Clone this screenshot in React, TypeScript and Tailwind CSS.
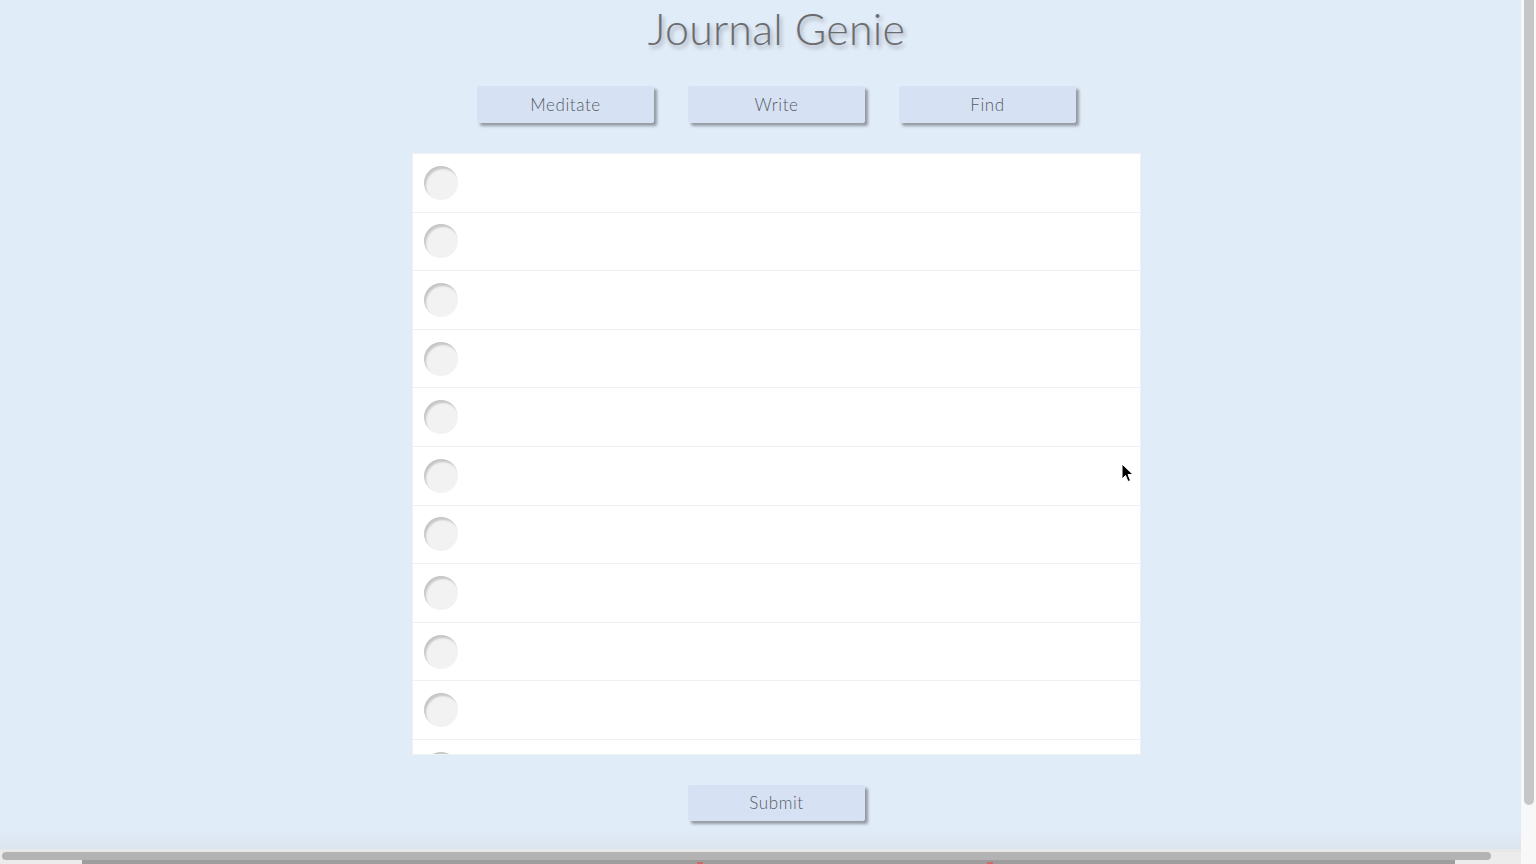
import React from "react";

const font = { fontFamily: "Lato, 'Noto Sans', sans-serif" };

function Btn({ label, h = "h-[37px]" }: { label: string; h?: string }) {
  return (
    <button
      className={`w-[177px] ${h} bg-[#d6e2f3] text-[#575b63] text-[17px] font-light tracking-[0.6px] shadow-[3px_3px_3px_rgba(0,0,0,0.35)] rounded-[2px]`}
      style={font}
    >
      {label}
    </button>
  );
}

export default function App() {
  const rows = Array.from({ length: 11 });
  return (
    <div className="relative w-[1553px] h-[897px] bg-[#e1ecf9] flex flex-col items-center" style={font}>
      <h1
        className="h-[50px] pt-[7px] text-[43px] leading-none font-light text-[#6c6c6e] tracking-[0.2px] [text-shadow:2px_3px_4px_rgba(0,0,0,0.3)]"
        style={font}
      >
        Journal Genie
      </h1>
      <div className="mt-[36px] flex gap-[34px]">
        <Btn label="Meditate" />
        <Btn label="Write" />
        <Btn label="Find" />
      </div>
      <div className="mt-[30px] w-[729px] h-[602px] bg-white overflow-hidden border border-[#eef1f5]">
        {rows.map((_, i) => (
          <div key={i} className="h-[58.6px] border-b border-[#eef0f3] flex items-center pl-[11px]">
            <div className="w-[34px] h-[34px] rounded-full bg-[#f2f2f2] shadow-[inset_2px_3px_2px_rgba(0,0,0,0.18)]" />
          </div>
        ))}
      </div>
      <div className="mt-[30px]">
        <Btn label="Submit" h="h-[36px]" />
      </div>
      <svg className="absolute left-[1121px] top-[463px]" width="13" height="20" viewBox="0 0 13 20">
        <path d="M1 1 L1 16 L4.5 12.5 L7 18.5 L9.5 17.5 L7 11.5 L12 11.5 Z" fill="#000" stroke="#fff" strokeWidth="1" />
      </svg>

      {/* bottom shade */}
      <div className="fixed left-0 top-[830px] w-[1521px] h-[19px] bg-gradient-to-b from-[rgba(225,236,249,0)] to-[#dbe4ef]" />
      {/* vertical scrollbar */}
      <div className="fixed left-[1521px] top-0 w-[15px] h-[864px] bg-[#f8f8f8] flex justify-center">
        <div className="w-[10px] h-[805px] rounded-b-[5px] bg-[#c6c6c6]" />
      </div>
      {/* horizontal scrollbar */}
      <div className="fixed left-0 top-[849px] w-[1521px] h-[15px] bg-[#ececec] flex flex-col">
        <div className="h-[3px] bg-[#e8e8e8]" />
        <div className="relative h-[12px]">
          <div className="absolute left-[82px] top-[5px] w-[1373px] h-[7px] bg-[#9d9d9d]" />
          <div className="absolute left-[2px] top-0 w-[1489px] h-[8px] rounded-[5px] bg-[#b3b3b3]" />
          <div className="absolute left-[697px] top-[10px] w-[6px] h-[2px] bg-[#d06a6a]" />
          <div className="absolute left-[987px] top-[10px] w-[6px] h-[2px] bg-[#d06a6a]" />
        </div>
      </div>
    </div>
  );
}
